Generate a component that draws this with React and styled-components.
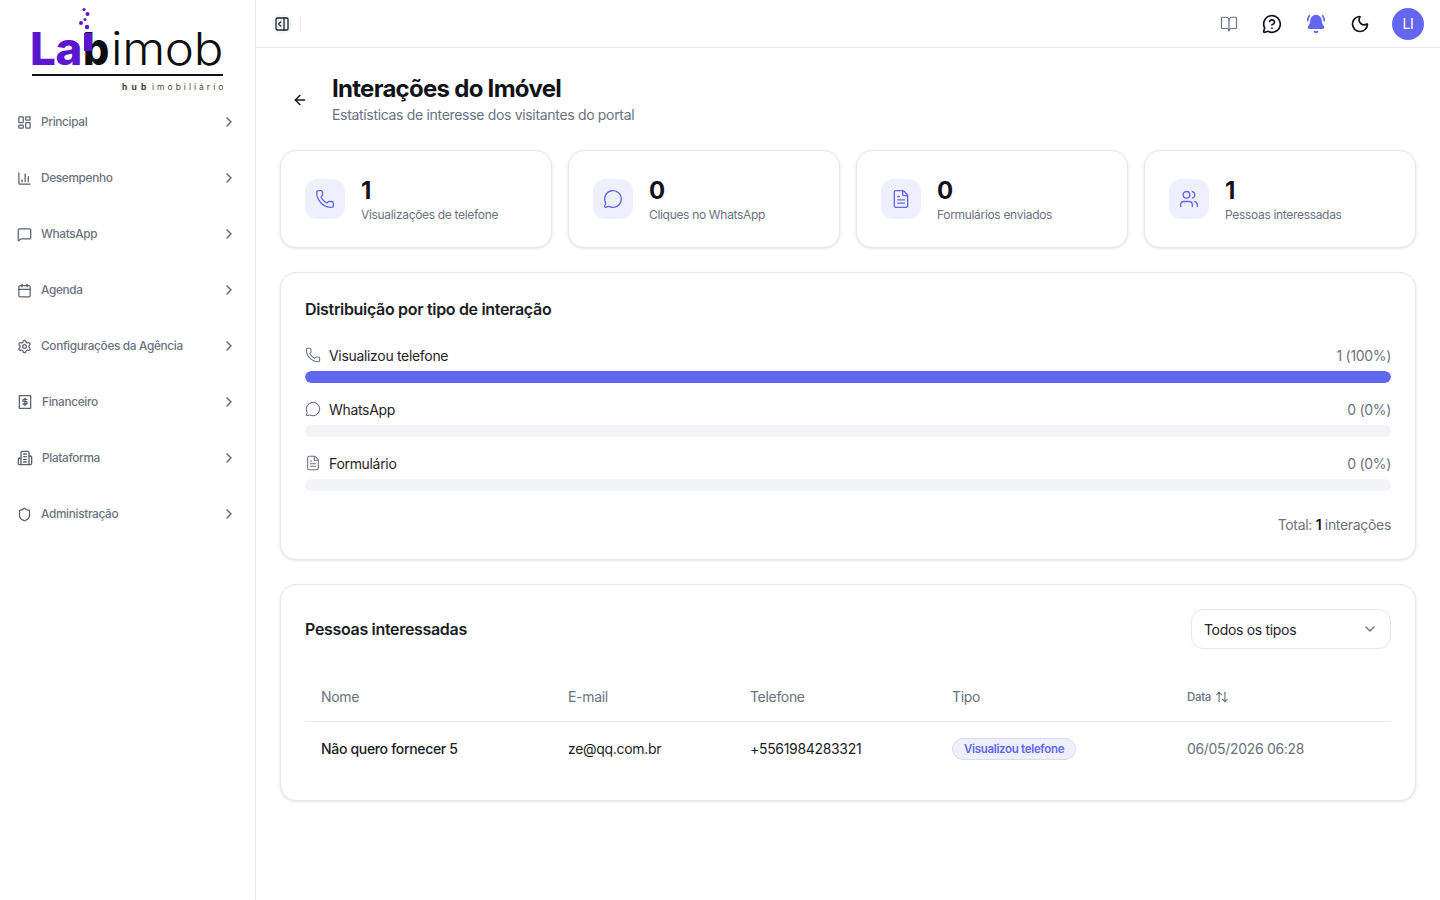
import React from 'react';
import styled, { createGlobalStyle } from 'styled-components';
import {
  ArrowLeft, ArrowUpDown, BellRing, BookOpen, Calendar, ChartColumn, ChevronDown, ChevronRight,
  FileText, LayoutDashboard, MessageCircle, MessageCircleQuestion, MessageSquare, Moon,
  PanelRightOpen, Phone, Settings, Shield, Users,
} from 'lucide-react';

const GlobalStyle = createGlobalStyle`
  * { box-sizing: border-box; }
  html, body { margin: 0; height: 100%; background: #ffffff; }
  body {
    font-family: Inter, "Liberation Sans", sans-serif;
    letter-spacing: -0.02em;
    color: #111318;
  }
`;

const Page = styled.div`
  display: flex;
  min-height: 900px;
`;

const Sidebar = styled.aside`
  width: 256px;
  flex-shrink: 0;
  border-right: 1px solid #e5e7eb;
  background: #ffffff;
`;

const LogoBox = styled.div`
  height: 94px;
`;

const NavList = styled.nav`
  display: flex;
  flex-direction: column;
`;

const NavItem = styled.a`
  display: flex;
  align-items: center;
  height: 56px;
  padding: 0 17px;
  gap: 9px;
  font-size: 11.8px;
  font-weight: 500;
  color: #6b7280;
  cursor: pointer;

  svg { color: #5b6270; flex-shrink: 0; }
`;

const NavLabel = styled.span`
  flex: 1;
`;

const NavChevron = styled(ChevronRight)`
  margin-right: 1px;
`;

const Content = styled.div`
  flex: 1;
  min-width: 0;
  display: flex;
  flex-direction: column;
`;

const TopBar = styled.header`
  height: 48px;
  display: flex;
  align-items: center;
  justify-content: space-between;
  border-bottom: 1px solid #e5e7eb;
  padding: 0 16px;
`;

const TopLeft = styled.div`
  display: flex;
  align-items: center;
  gap: 8px;
`;

const PanelButton = styled.button`
  width: 20px;
  height: 20px;
  border: 0;
  padding: 0;
  display: flex;
  align-items: center;
  justify-content: center;
  background: #f3f4f6;
  border-radius: 50%;
  color: #1f2937;
`;

const VDivider = styled.span`
  width: 1px;
  height: 16px;
  background: #e5e7eb;
`;

const TopRight = styled.div`
  display: flex;
  align-items: center;
  gap: 24px;
  color: #111318;
`;

const IconSlot = styled.span`
  display: flex;
  color: ${p => p.$color || '#111318'};
`;

const Avatar = styled.div`
  width: 32px;
  height: 32px;
  border-radius: 50%;
  background: #6366f1;
  color: #ffffff;
  font-size: 14px;
  display: flex;
  align-items: center;
  justify-content: center;
  margin-left: -2px;
`;

const Main = styled.main`
  padding: 24px;
  display: flex;
  flex-direction: column;
  gap: 24px;
`;

const TitleRow = styled.div`
  display: flex;
  align-items: center;
  height: 52px;
  gap: 24px;
  padding-left: 12px;
  margin-bottom: 0;
  margin-top: 2px;
`;

const TitleBlock = styled.div`
  display: flex;
  flex-direction: column;
  gap: 2px;
`;

const Title = styled.h1`
  margin: 0;
  font-size: 24px;
  line-height: 28px;
  font-weight: 700;
  letter-spacing: -0.03em;
`;

const Subtitle = styled.p`
  margin: 0;
  font-size: 14px;
  line-height: 20px;
  color: #6b7280;
`;

const StatsGrid = styled.div`
  display: grid;
  grid-template-columns: repeat(4, 1fr);
  gap: 16px;
`;

const Card = styled.section`
  background: #ffffff;
  border: 1px solid #e5e7eb;
  border-radius: 16px;
  box-shadow: 0 1px 3px rgba(0, 0, 0, 0.1);
  padding: 24px;
`;

const StatCard = styled(Card)`
  display: flex;
  align-items: center;
  gap: 16px;
  height: 98px;
`;

const StatIcon = styled.div`
  width: 40px;
  height: 40px;
  border-radius: 12px;
  background: #eef0fe;
  color: #6366f1;
  display: flex;
  align-items: center;
  justify-content: center;
`;

const StatValue = styled.div`
  font-size: 24px;
  line-height: 32px;
  font-weight: 700;
`;

const StatLabel = styled.div`
  font-size: 12px;
  line-height: 16px;
  color: #6b7280;
`;

const CardTitle = styled.h2`
  margin: 0;
  font-size: 16px;
  line-height: 24px;
  font-weight: 600;
  color: #1a1d24;
`;

const Bars = styled.div`
  display: flex;
  flex-direction: column;
  gap: 16px;
  margin-top: 24px;
`;

const BarRow = styled.div`
  display: flex;
  flex-direction: column;
  gap: 6px;
`;

const BarHead = styled.div`
  display: flex;
  align-items: center;
  justify-content: space-between;
  height: 20px;
  font-size: 14px;
`;

const BarLabel = styled.span`
  display: flex;
  align-items: center;
  gap: 8px;
  color: #1f2329;

  svg { color: #6b7280; }
`;

const BarValue = styled.span`
  color: #6b7280;
`;

const Track = styled.div`
  height: 12px;
  border-radius: 6px;
  background: #f3f4f6;
  overflow: hidden;
`;

const Fill = styled.div`
  height: 100%;
  border-radius: 6px;
  background: #6366f1;
`;

const Total = styled.div`
  margin-top: 24px;
  text-align: right;
  font-size: 14px;
  line-height: 20px;
  color: #6b7280;

  strong { color: #111318; font-weight: 600; }
`;

const TableHead = styled.div`
  display: flex;
  align-items: center;
  justify-content: space-between;
  margin-bottom: 24px;
`;

const Select = styled.div`
  width: 200px;
  height: 40px;
  border: 1px solid #e5e7eb;
  border-radius: 12px;
  padding: 0 12px;
  display: flex;
  align-items: center;
  justify-content: space-between;
  font-size: 14px;
  color: #1f2329;

  svg { color: #6b7280; }
`;

const Table = styled.table`
  width: 100%;
  border-collapse: collapse;
  table-layout: fixed;
`;

const Col = styled.col`
  width: ${p => p.$w}px;
`;

const Th = styled.th`
  height: 48px;
  padding: 0 16px;
  text-align: left;
  font-size: 14px;
  font-weight: 400;
  color: #6b7280;
  border-bottom: 1px solid #e5e7eb;
`;

const SortLabel = styled.span`
  display: flex;
  align-items: center;
  gap: 4px;
  font-size: 11.5px;
  font-weight: 500;
`;

const Td = styled.td`
  height: 55px;
  padding: 0 16px;
  font-size: 14px;
  color: ${p => p.$muted ? '#6b7280' : '#1a1d24'};
  font-weight: ${p => p.$strong ? 500 : 400};
`;

const Badge = styled.span`
  display: inline-flex;
  align-items: center;
  height: 22px;
  padding: 0 11px;
  border-radius: 11px;
  border: 1px solid #d9daf8;
  background: #eef0fe;
  color: #6366f1;
  font-size: 11.5px;
  font-weight: 600;
`;

const Logo = () => (
  <svg width="256" height="94" viewBox="0 0 256 94">
    <g fill="#5b16cf">
      <circle cx="84" cy="9.5" r="1.6" />
      <circle cx="87.5" cy="14" r="2" />
      <circle cx="85" cy="19.5" r="1.5" />
      <circle cx="81" cy="23" r="2" />
      <circle cx="87" cy="27" r="2.2" />
    </g>
    <text x="30" y="65" fontFamily="Inter, sans-serif" fontSize="45" fontWeight="800" fill="#5b16cf" textLength="52" lengthAdjust="spacingAndGlyphs">La</text>
    <text x="83" y="65" fontFamily="Inter, sans-serif" fontSize="45" fontWeight="800" fill="#0d0d0d" textLength="26" lengthAdjust="spacingAndGlyphs">b</text>
    <rect x="84" y="33" width="8" height="18" fill="#5b16cf" />
    <text x="111" y="65" fontFamily="Inter, sans-serif" fontSize="45" fontWeight="300" fill="#0d0d0d" textLength="112" lengthAdjust="spacingAndGlyphs">imob</text>
    <rect x="32" y="74" width="191" height="2" fill="#111111" />
    <text x="122" y="90" fontFamily="Inter, sans-serif" fontSize="8.5" fontWeight="700" fill="#3a3a2c" textLength="24">hub</text>
    <text x="152" y="90" fontFamily="Inter, sans-serif" fontSize="8.5" fill="#4a4a40" textLength="71">imobiliário</text>
  </svg>
);

const ReceiptIcon = () => (
  <svg width="16" height="16" viewBox="0 0 24 24" fill="none" stroke="currentColor" strokeWidth="2" strokeLinecap="round" strokeLinejoin="round">
    <rect x="3.5" y="2.5" width="17" height="19" strokeDasharray="2.4 1.2" />
    <path d="M15 8h-4.5a1.75 1.75 0 0 0 0 3.5h3a1.75 1.75 0 0 1 0 3.5H9" />
    <path d="M12 6.5v11" />
  </svg>
);

const BuildingIcon = () => (
  <svg width="16" height="16" viewBox="0 0 24 24" fill="none" stroke="currentColor" strokeWidth="2" strokeLinecap="round" strokeLinejoin="round">
    <path d="M6 22V4a2 2 0 0 1 2-2h8a2 2 0 0 1 2 2v18Z" />
    <path d="M6 12H4a2 2 0 0 0-2 2v6a2 2 0 0 0 2 2h2" />
    <path d="M18 9h2a2 2 0 0 1 2 2v9a2 2 0 0 1-2 2h-2" />
    <path d="M10 6h4M10 10h4M10 14h4M10 18h4" />
  </svg>
);

const navItems = [
  { label: 'Principal', icon: <LayoutDashboard size={15} /> },
  { label: 'Desempenho', icon: <ChartColumn size={15} /> },
  { label: 'WhatsApp', icon: <MessageSquare size={15} /> },
  { label: 'Agenda', icon: <Calendar size={15} /> },
  { label: 'Configurações da Agência', icon: <Settings size={15} /> },
  { label: 'Financeiro', icon: <ReceiptIcon /> },
  { label: 'Plataforma', icon: <BuildingIcon /> },
  { label: 'Administração', icon: <Shield size={15} /> },
];

const stats = [
  { value: 1, label: 'Visualizações de telefone', Icon: Phone },
  { value: 0, label: 'Cliques no WhatsApp', Icon: MessageCircle },
  { value: 0, label: 'Formulários enviados', Icon: FileText },
  { value: 1, label: 'Pessoas interessadas', Icon: Users },
];

const distribution = [
  { label: 'Visualizou telefone', value: '1 (100%)', pct: 100, Icon: Phone },
  { label: 'WhatsApp', value: '0 (0%)', pct: 0, Icon: MessageCircle },
  { label: 'Formulário', value: '0 (0%)', pct: 0, Icon: FileText },
];

const App = () => {
  return (
    <Page>
      <GlobalStyle />
      <Sidebar>
        <LogoBox><Logo /></LogoBox>
        <NavList>
          {navItems.map(item => (
            <NavItem key={item.label}>
              {item.icon}
              <NavLabel>{item.label}</NavLabel>
              <NavChevron size={16} />
            </NavItem>
          ))}
        </NavList>
      </Sidebar>
      <Content>
        <TopBar>
          <TopLeft>
            <PanelButton><PanelRightOpen size={16} /></PanelButton>
            <VDivider />
          </TopLeft>
          <TopRight>
            <IconSlot $color="#6b7280"><BookOpen size={18} strokeWidth={1.6} /></IconSlot>
            <IconSlot><MessageCircleQuestion size={20} /></IconSlot>
            <IconSlot $color="#6366f1"><BellRing size={20} fill="#6366f1" /></IconSlot>
            <IconSlot><Moon size={20} /></IconSlot>
            <Avatar>LI</Avatar>
          </TopRight>
        </TopBar>
        <Main>
          <TitleRow>
            <ArrowLeft size={16} strokeWidth={2} />
            <TitleBlock>
              <Title>Interações do Imóvel</Title>
              <Subtitle>Estatísticas de interesse dos visitantes do portal</Subtitle>
            </TitleBlock>
          </TitleRow>

          <StatsGrid>
            {stats.map(({ value, label, Icon }) => (
              <StatCard key={label}>
                <StatIcon><Icon size={20} strokeWidth={1.6} /></StatIcon>
                <div>
                  <StatValue>{value}</StatValue>
                  <StatLabel>{label}</StatLabel>
                </div>
              </StatCard>
            ))}
          </StatsGrid>

          <Card>
            <CardTitle>Distribuição por tipo de interação</CardTitle>
            <Bars>
              {distribution.map(({ label, value, pct, Icon }) => (
                <BarRow key={label}>
                  <BarHead>
                    <BarLabel><Icon size={16} strokeWidth={1.6} />{label}</BarLabel>
                    <BarValue>{value}</BarValue>
                  </BarHead>
                  <Track><Fill style={{ width: `${pct}%` }} /></Track>
                </BarRow>
              ))}
            </Bars>
            <Total>Total: <strong>1</strong> interações</Total>
          </Card>

          <Card>
            <TableHead>
              <CardTitle>Pessoas interessadas</CardTitle>
              <Select>Todos os tipos <ChevronDown size={16} /></Select>
            </TableHead>
            <Table>
              <colgroup>
                <Col $w={247} />
                <Col $w={182} />
                <Col $w={202} />
                <Col $w={235} />
                <Col $w={220} />
              </colgroup>
              <thead>
                <tr>
                  <Th>Nome</Th>
                  <Th>E-mail</Th>
                  <Th>Telefone</Th>
                  <Th>Tipo</Th>
                  <Th><SortLabel>Data <ArrowUpDown size={14} /></SortLabel></Th>
                </tr>
              </thead>
              <tbody>
                <tr>
                  <Td $strong>Não quero fornecer 5</Td>
                  <Td>ze@qq.com.br</Td>
                  <Td>+5561984283321</Td>
                  <Td><Badge>Visualizou telefone</Badge></Td>
                  <Td $muted>06/05/2026 06:28</Td>
                </tr>
              </tbody>
            </Table>
          </Card>
        </Main>
      </Content>
    </Page>
  );
};

export default App;
